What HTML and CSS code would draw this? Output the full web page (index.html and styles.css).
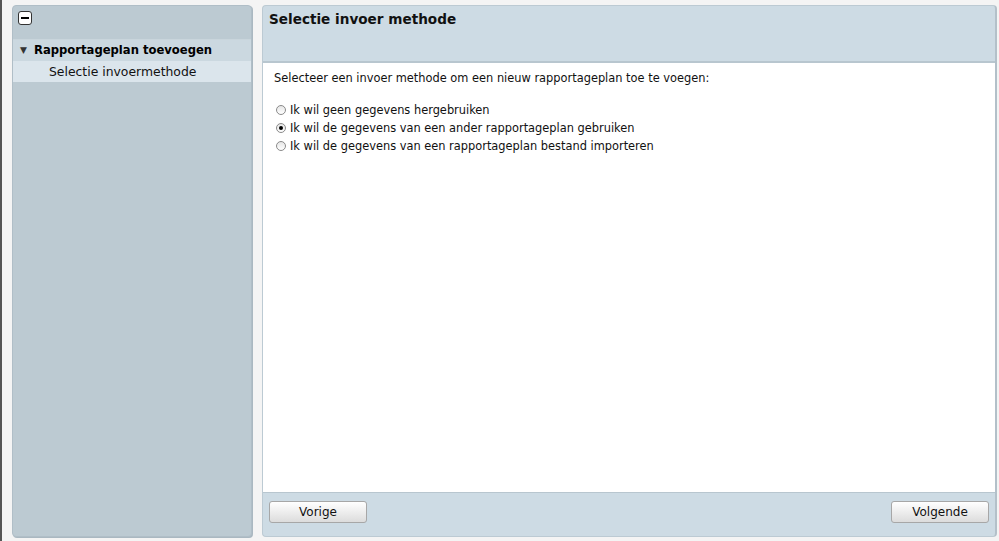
FILE: index.html
```html
<!DOCTYPE html>
<html lang="nl">
  <head>
    <meta charset="UTF-8" />
    <title>Rapportageplan toevoegen</title>
    <link rel="stylesheet" href="styles.css">
  </head>
  <body>
    <div class="page">
      <aside class="sidebar">
        <div class="sidebar-top">
          <span class="collapse-btn"></span>
        </div>
        <div class="tree-group"><span class="arrow">&#9660;</span>Rapportageplan toevoegen</div>
        <div class="tree-item">Selectie invoermethode</div>
      </aside>

      <section class="panel">
        <header class="panel-header">
          <h1>Selectie invoer methode</h1>
        </header>
        <div class="panel-body">
          <p class="intro">Selecteer een invoer methode om een nieuw rapportageplan toe te voegen:</p>
          <label class="choice"><input type="radio" name="methode"> Ik wil geen gegevens hergebruiken</label>
          <label class="choice"><input type="radio" name="methode" checked> Ik wil de gegevens van een ander rapportageplan gebruiken</label>
          <label class="choice"><input type="radio" name="methode"> Ik wil de gegevens van een rapportageplan bestand importeren</label>
        </div>
        <footer class="panel-footer">
          <button class="btn">Vorige</button>
          <button class="btn">Volgende</button>
        </footer>
      </section>
    </div>
  </body>
</html>
```

FILE: styles.css
```css
* {
  margin: 0;
  padding: 0;
  box-sizing: border-box;
}

body {
  background: #f4f4f4;
  font-family: Verdana, 'DejaVu Sans', sans-serif;
  color: #000;
  height: 541px;
  overflow: hidden;
}

.page {
  display: flex;
  gap: 10px;
  height: 541px;
  padding: 5px 2px 4px 10px;
  border-left: 2px solid #555;
}

/* Left tree panel */
.sidebar {
  width: 240px;
  background: #bccad2;
  border: 1px solid #b0bec7;
  border-radius: 4px;
  box-shadow: 1px 1px 0 #aab8c1;
}

.sidebar-top {
  height: 34px;
  padding: 5px 0 0 5px;
  border-bottom: 1px solid #c9d5dc;
}

.collapse-btn {
  display: block;
  width: 14px;
  height: 14px;
  background: #fff;
  border: 1px solid #333;
  border-radius: 3px;
  position: relative;
}

.collapse-btn::after {
  content: "";
  position: absolute;
  left: 2px;
  right: 2px;
  top: 5px;
  height: 2px;
  background: #000;
}

.tree-group {
  height: 21px;
  line-height: 21px;
  padding-left: 7px;
  background: #cbd8e0;
  font-size: 11.6px;
  font-weight: bold;
}

.arrow {
  display: inline-block;
  width: 14px;
  font-size: 9px;
  color: #333;
  vertical-align: top;
}

.tree-item {
  height: 21px;
  line-height: 21px;
  padding-left: 36px;
  background: #dbe5ec;
  font-size: 12.4px;
  color: #111;
}

/* Right content panel */
.panel {
  flex: 1;
  display: flex;
  flex-direction: column;
  background: #cddbe4;
  border: 1px solid #bccad3;
  border-right: 2px solid #b3c0c9;
  border-radius: 4px;
}

.panel-header {
  height: 57px;
  padding: 5px 6px;
  border-bottom: 2px solid #b8c6cf;
}

.panel-header h1 {
  font-size: 13.6px;
  font-weight: bold;
  color: #111;
}

.panel-body {
  flex: 1;
  background: #fff;
  padding: 8px 11px;
  font-size: 11.4px;
  color: #111;
}

.intro {
  margin-bottom: 16px;
}

.choice {
  display: flex;
  align-items: center;
  height: 18px;
}

.choice input {
  appearance: none;
  width: 10px;
  height: 10px;
  margin: 0 4px 0 2px;
  border: 1px solid #8a8a8a;
  border-radius: 50%;
  background: linear-gradient(#e6e6e6, #ffffff);
  display: flex;
  align-items: center;
  justify-content: center;
}

.choice input:checked::after {
  content: "";
  width: 4px;
  height: 4px;
  border-radius: 50%;
  background: #000;
}

.panel-footer {
  height: 44px;
  display: flex;
  justify-content: space-between;
  align-items: flex-start;
  padding: 8px 6px 0;
  border-top: 1px solid #b8c6cf;
}

.btn {
  width: 98px;
  height: 22px;
  font-family: Verdana, 'DejaVu Sans', sans-serif;
  font-size: 12px;
  color: #111;
  background: linear-gradient(#ffffff, #dcdcdc);
  border: 1px solid #a7a7a7;
  border-radius: 3px;
}
```
